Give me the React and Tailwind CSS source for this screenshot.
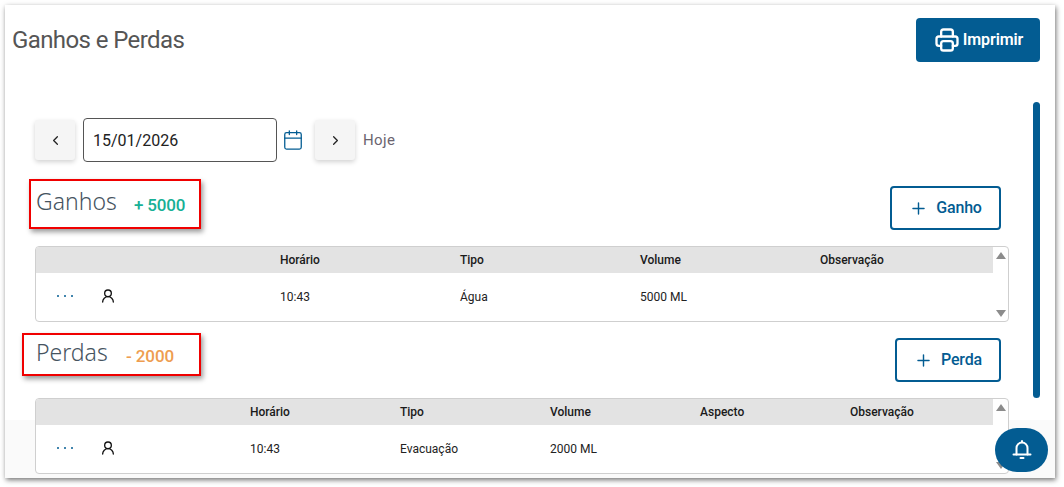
import React from 'react';
import { Calendar, ChevronLeft, ChevronRight, Plus, UserRound } from 'lucide-react';
import { TbPrinter } from 'react-icons/tb';

const ganhosCols = ['Horário', 'Tipo', 'Volume', 'Observação'];
const perdasCols = ['Horário', 'Tipo', 'Volume', 'Aspecto', 'Observação'];

const BellIcon = ({ className }) => (
  <svg viewBox="0 0 24 24" fill="none" stroke="currentColor" strokeWidth="2" strokeLinecap="round" strokeLinejoin="round" className={className}>
    <path d="M6.500 16.500V10a5.500 5.500 0 0 1 11 0v6.500" />
    <path d="M3.500 16.500h17" />
    <path d="M12 3v1" />
    <path d="M10.500 20h3" />
  </svg>
);

const Arrow = ({ down }) => (
  <svg viewBox="0 0 10 7" className="h-[7px] w-[10px] fill-[#8c8c8c]">
    <path d={down ? 'M0 0h10L5 7z' : 'M5 0l5 7H0z'} />
  </svg>
);

const Table = ({ columns, gridClass, row }) => (
  <div className="relative z-10 flex h-[76px] w-[974px] overflow-hidden rounded-[4px] border border-[#cfcfcf] bg-white">
    <div className="w-[957px]">
      <div className={`grid h-[26px] items-center bg-[#e3e3e3] text-[12px] font-medium text-[#1a1a1a] ${gridClass}`}>
        <div />
        {columns.map((c) => <div key={c}>{c}</div>)}
      </div>
      <div className={`grid h-[48px] items-center text-[12px] text-[#222] ${gridClass}`}>
        <div className="flex items-center pb-[3px]">
          <span className="ml-[21px] flex w-[16px] justify-between">
            <i className="h-[2px] w-[2px] rounded-full bg-[#035c92]" />
            <i className="h-[2px] w-[2px] rounded-full bg-[#035c92]" />
            <i className="h-[2px] w-[2px] rounded-full bg-[#035c92]" />
          </span>
          <UserRound className="ml-[27px] h-[16px] w-[16px] text-[#111]" strokeWidth={2} />
        </div>
        {row.map((c, i) => <div key={i}>{c}</div>)}
      </div>
    </div>
    <div className="flex flex-1 flex-col items-center justify-between pt-[5px] pb-[4px]">
      <Arrow />
      <Arrow down />
    </div>
  </div>
);

const AddButton = ({ label, className }) => (
  <button className={`flex h-[44px] items-center justify-center gap-[8px] rounded-[4px] border-2 border-[#035c92] bg-white text-[16px] font-medium tracking-[-0.2px] text-[#035c92] ${className}`}>
    <Plus className="h-[19px] w-[19px]" strokeWidth={1.8} />
    {label}
  </button>
);

const NavButton = ({ children }) => (
  <button className="flex h-[40px] w-[40px] items-center justify-center rounded-[3px] bg-[#f5f5f5] text-[#222] shadow-[0_2px_5px_rgba(0,0,0,0.18)]">
    {children}
  </button>
);

export default function App() {
  return (
    <div className="h-[487px] w-[1064px] overflow-hidden bg-white font-['Roboto',sans-serif]">
      <div className="relative ml-[5px] mt-[5px] h-[473px] w-[1050px] bg-white pt-[13px] shadow-[1px_2px_5px_rgba(0,0,0,0.55)]">
        <div className="absolute inset-x-0 bottom-0 h-[58px] bg-[#fafafa]" />

        <div className="flex items-start justify-between pl-[7px] pr-[15px]">
          <h1 className="mt-[7px] text-[24px] leading-[30px] tracking-[-0.6px] text-[#555]">Ganhos e Perdas</h1>
          <button className="flex h-[44px] w-[124px] items-center justify-center gap-[2px] rounded-[4px] bg-[#035c92] text-[16px] font-semibold tracking-[-0.1px] text-white">
            <TbPrinter className="h-[28px] w-[28px]" />
            Imprimir
          </button>
        </div>

        <div className="mt-[56px] flex h-[44px] items-center pl-[30px]">
          <NavButton><ChevronLeft className="h-[15px] w-[15px]" strokeWidth={2} /></NavButton>
          <div className="ml-[8px] flex h-[44px] w-[194px] items-center rounded-[4px] border border-[#555] pl-[9px] pt-[1px] text-[16px] text-[#222]">15/01/2026</div>
          <Calendar className="ml-[5px] h-[22px] w-[22px] text-[#035c92]" strokeWidth={1.4} />
          <div className="ml-[11px]"><NavButton><ChevronRight className="h-[15px] w-[15px]" strokeWidth={2} /></NavButton></div>
          <span className="ml-[8px] text-[15px] tracking-[0.4px] text-[#6b6470]">Hoje</span>
        </div>

        <div className="mt-[17px] flex h-[51px] items-start justify-between pl-[24px] pr-[54px]">
          <div className="flex h-[50px] w-[172px] items-start gap-[16px] border-2 border-[#f00000] bg-white pl-[5px] shadow-[2px_3px_5px_rgba(0,0,0,0.4)]">
            <span className="mt-[5px] w-[82px] font-['Noto_Sans',sans-serif] text-[23px] font-light leading-[30px] text-[#46545f]">Ganhos</span>
            <span className="mt-[13px] text-[17px] font-medium leading-[22px] tracking-[-0.2px] text-[#17b095]">+ 5000</span>
          </div>
          <AddButton label="Ganho" className="mt-[7px] w-[111px]" />
        </div>

        <div className="mt-[16px] pl-[30px]">
          <Table columns={ganhosCols} gridClass="grid-cols-[244px_180px_180px_180px_173px]" row={['10:43', 'Água', '5000 ML', '']} />
        </div>

        <div className="mt-[11px] flex h-[49px] items-start justify-between pl-[17px] pr-[54px]">
          <div className="flex h-[43px] w-[179px] items-start gap-[16px] border-2 border-[#f00000] bg-white pl-[12px] shadow-[2px_3px_5px_rgba(0,0,0,0.4)]">
            <span className="mt-[2px] w-[74px] font-['Noto_Sans',sans-serif] text-[23px] font-light leading-[30px] text-[#46545f]">Perdas</span>
            <span className="mt-[10px] text-[17px] font-medium leading-[22px] tracking-[-0.1px] text-[#ee9d50]">- 2000</span>
          </div>
          <AddButton label="Perda" className="mt-[5px] w-[106px]" />
        </div>

        <div className="mt-[16px] pl-[30px]">
          <Table columns={perdasCols} gridClass="grid-cols-[214px_150px_150px_150px_150px_143px]" row={['10:43', 'Evacuação', '2000 ML', '', '']} />
        </div>

        <div className="absolute right-[15px] top-[97px] h-[296px] w-[7px] rounded-full bg-[#035c92]" />
        <button className="absolute left-[990px] top-[423px] z-20 flex h-[44px] w-[53px] items-center justify-center rounded-full bg-[#035c92] text-white">
          <BellIcon className="h-[24px] w-[24px]" />
        </button>
      </div>
    </div>
  );
}
